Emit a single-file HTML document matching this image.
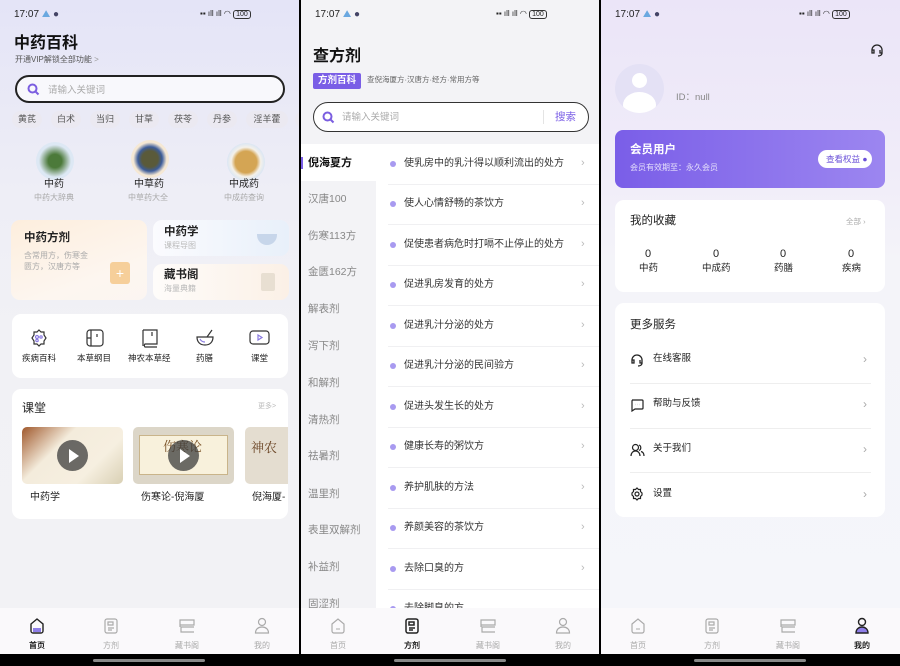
<!DOCTYPE html>
<html><head><meta charset="utf-8"><style>
*{margin:0;padding:0;box-sizing:border-box}
body{width:900px;height:666px;overflow:hidden;background:#000;font-family:"Liberation Sans","Noto Sans CJK SC",sans-serif;position:relative;color:#222;line-height:1.5}
.a{position:absolute;white-space:nowrap}
.p{position:absolute;top:0;height:654px;overflow:hidden}
.st{font-size:10px;color:#222;top:7px}
.nav{position:absolute;left:0;right:0;top:608px;height:46px;background:#faf9fb}
.nl{position:absolute;top:32px;font-size:8px;color:#aaa;width:40px;text-align:center}
.ind{position:absolute;top:659px;height:3px;width:112px;background:#888;border-radius:2px}
.chip{position:absolute;top:111px;height:17px;background:#ebe9f1;border-radius:9px;font-size:9px;color:#555;text-align:center;line-height:17px;width:30px}
.card{position:absolute;background:#fff;border-radius:9px}
.rt{position:absolute;left:392px;font-size:10px;color:#333}
.rt:before{content:"";position:absolute;left:-2px;top:5px;width:6px;height:6px;border-radius:50%;background:#a89af0}
.rt span{margin-left:12px}
.ch{position:absolute;left:581px;font-size:11px;color:#bbb}
.dv{position:absolute;left:388px;width:212px;height:1px;background:#f0f0f2}
.lt{position:absolute;left:308px;font-size:10.5px;color:#888}
</style></head><body>

<!-- PANEL 1 -->
<div class="p" style="left:0;width:299px;background:linear-gradient(180deg,#e4e4f7 0%,#eeeef6 30%,#f1f1f5 50%,#f2f2f5 100%)">
 <div class="a st" style="left:14px">17:07 <span style="color:#6aa8e0">⛰</span> <span style="color:#446">●</span></div>
 <div class="a st" style="left:200px;font-size:8px;top:8px">▪▪ ıll ıll ◠ <span style="border:1px solid #333;border-radius:3px;padding:0 2px;font-size:7px">100</span></div>
 <div class="a" style="left:14px;top:32px;font-size:16px;font-weight:bold;color:#111">中药百科</div>
 <div class="a" style="left:15px;top:54px;font-size:8px;color:#555">开通VIP解锁全部功能 <span style="color:#999">&gt;</span></div>
 <div class="a" style="left:15px;top:75px;width:270px;height:28px;border:2px solid #222;border-radius:14px;background:#f8f8fc">
  <svg class="a" style="left:10px;top:6px" width="13" height="13" viewBox="0 0 13 13"><circle cx="5.5" cy="5.5" r="4" fill="none" stroke="#7b5ee0" stroke-width="2"/><path d="M8.5 8.5l3 3" stroke="#7b5ee0" stroke-width="2"/></svg>
  <div class="a" style="left:31px;top:7px;font-size:9.5px;color:#aaa">请输入关键词</div>
 </div>
 <div class="chip" style="left:12px">黄芪</div><div class="chip" style="left:51px">白术</div><div class="chip" style="left:90px">当归</div><div class="chip" style="left:129px">甘草</div><div class="chip" style="left:168px">茯苓</div><div class="chip" style="left:207px">丹参</div><div class="chip" style="left:246px;width:42px">淫羊藿</div><div class="chip" style="left:295px">.</div>
 <div class="a" style="left:36px;top:142px;width:38px;height:38px;border-radius:50%;background:radial-gradient(circle,#4c7a3a 25%,#dde8f4 60%)"></div>
 <div class="a" style="left:131px;top:140px;width:38px;height:38px;border-radius:50%;background:radial-gradient(circle,#5a5a3a 30%,#3c5c9a 45%,#f5e8d4 62%)"></div>
 <div class="a" style="left:227px;top:143px;width:38px;height:38px;border-radius:50%;background:radial-gradient(circle,#d4a554 40%,#f4f1ea 55%,#dbe6f3 70%)"></div>
 <div class="a" style="left:44px;top:177px;font-size:10px;color:#222">中药</div>
 <div class="a" style="left:34px;top:192px;font-size:8px;color:#aaa">中药大辞典</div>
 <div class="a" style="left:134px;top:177px;font-size:10px;color:#222">中草药</div>
 <div class="a" style="left:128px;top:192px;font-size:8px;color:#aaa">中草药大全</div>
 <div class="a" style="left:229px;top:177px;font-size:10px;color:#222">中成药</div>
 <div class="a" style="left:224px;top:192px;font-size:8px;color:#aaa">中成药查询</div>
 <div class="a" style="left:11px;top:220px;width:136px;height:80px;border-radius:9px;background:linear-gradient(160deg,#fdeedd,#fdf6f0 70%,#fbf5f1)"></div>
 <div class="a" style="left:24px;top:230px;font-size:11.5px;font-weight:bold;color:#222">中药方剂</div>
 <div class="a" style="left:24px;top:250px;font-size:8px;color:#aaa;line-height:11px;white-space:normal;width:70px">含常用方，伤寒金匮方，汉唐方等</div>
 <div class="a" style="left:110px;top:262px;width:20px;height:22px;border-radius:3px;background:#f6cf9a;color:#fff;text-align:center;font-size:14px;line-height:22px">+</div>
 <div class="a" style="left:153px;top:220px;width:136px;height:36px;border-radius:9px;background:linear-gradient(90deg,#fbfbfe,#e8f0fa)"></div>
 <div class="a" style="left:164px;top:224px;font-size:11.5px;font-weight:bold;color:#222">中药学</div>
 <div class="a" style="left:164px;top:240px;font-size:8px;color:#bbb">课程导图</div>
 <div class="a" style="left:257px;top:234px;width:20px;height:11px;border-radius:0 0 10px 10px;background:#c7d6ea"></div>
 <div class="a" style="left:153px;top:264px;width:136px;height:36px;border-radius:9px;background:linear-gradient(90deg,#fefcfa,#fbf0e6)"></div>
 <div class="a" style="left:164px;top:267px;font-size:11.5px;font-weight:bold;color:#222">藏书阁</div>
 <div class="a" style="left:164px;top:283px;font-size:8px;color:#bbb">海量典籍</div>
 <div class="a" style="left:261px;top:273px;width:14px;height:18px;border-radius:2px;background:#e8dfd2"></div>

 <div class="card" style="left:12px;top:314px;width:276px;height:64px"></div>
 <svg class="a" style="left:29px;top:328px" width="20" height="20" viewBox="0 0 20 20" fill="none" stroke="#333" stroke-width="1.2"><path d="M10 2l2 2h3v3l2 3-2 3v3h-3l-2 2-2-2H5v-3l-2-3 2-3V4h3z"/><circle cx="8" cy="9" r="1.5" stroke="#8a7ae0"/><circle cx="12" cy="9" r="1.2" stroke="#8a7ae0"/><circle cx="8" cy="12.5" r="1.2" stroke="#8a7ae0"/></svg>
 <svg class="a" style="left:85px;top:328px" width="20" height="20" viewBox="0 0 20 20" fill="none" stroke="#333" stroke-width="1.2"><rect x="2" y="2" width="16" height="16" rx="3"/><path d="M6 2v16M2 10h4M12 6v3"/></svg>
 <svg class="a" style="left:140px;top:328px" width="20" height="20" viewBox="0 0 20 20" fill="none" stroke="#333" stroke-width="1.2"><path d="M3 2h14v14H5a2 2 0 0 0 0 3h12M3 2v16M12 4v4"/></svg>
 <svg class="a" style="left:195px;top:328px" width="20" height="20" viewBox="0 0 20 20" fill="none" stroke="#333" stroke-width="1.2"><path d="M2 9h16c0 5-3 8-8 8s-8-3-8-8zM12 9l5-7"/><path d="M5 11c1 2 3 3 5 3" stroke="#8a7ae0"/></svg>
 <svg class="a" style="left:249px;top:329px" width="21" height="18" viewBox="0 0 21 18" fill="none" stroke="#333" stroke-width="1.2"><rect x="1" y="2" width="19" height="13" rx="3"/><path d="M9 6l4 2.5-4 2.5z" stroke="#8a7ae0"/></svg>
 <div class="a" style="left:22px;top:352px;font-size:8.5px">疾病百科</div>
 <div class="a" style="left:77px;top:352px;font-size:8.5px">本草纲目</div>
 <div class="a" style="left:128px;top:352px;font-size:8.5px">神农本草经</div>
 <div class="a" style="left:196px;top:352px;font-size:8.5px">药膳</div>
 <div class="a" style="left:251px;top:352px;font-size:8.5px">课堂</div>

 <div class="card" style="left:12px;top:389px;width:276px;height:130px"></div>
 <div class="a" style="left:22px;top:399px;font-size:12px;color:#222">课堂</div>
 <div class="a" style="left:258px;top:402px;font-size:7px;color:#bbb">更多&gt;</div>
 <div class="a" style="left:22px;top:427px;width:101px;height:57px;border-radius:5px;background:linear-gradient(135deg,#a0582c 0%,#f4ecdc 35%,#f6efe0 70%,#d9d0b4 100%)"></div>
 <div class="a" style="left:133px;top:427px;width:101px;height:57px;border-radius:5px;background:#dcd6c8"><div class="a" style="left:6px;top:8px;width:89px;height:40px;background:#f8f1dc;border:1px solid #c9b48a"></div><div class="a" style="left:30px;top:9px;font-size:13px;color:#7a5226;font-family:'Noto Serif CJK SC',serif">伤寒论</div></div>
 <div class="a" style="left:245px;top:427px;width:43px;height:57px;border-radius:5px 0 0 5px;background:#e4ddd0"><div class="a" style="left:6px;top:10px;font-size:13px;color:#6a4424;font-family:'Noto Serif CJK SC',serif">神农</div></div>
 <div class="a" style="left:57px;top:440px;width:31px;height:31px;border-radius:50%;background:rgba(60,60,60,.75)"><div class="a" style="left:12px;top:9px;border-left:10px solid #fff;border-top:7px solid transparent;border-bottom:7px solid transparent"></div></div>
 <div class="a" style="left:168px;top:440px;width:31px;height:31px;border-radius:50%;background:rgba(60,60,60,.75)"><div class="a" style="left:12px;top:9px;border-left:10px solid #fff;border-top:7px solid transparent;border-bottom:7px solid transparent"></div></div>
 <div class="a" style="left:30px;top:490px;font-size:10px">中药学</div>
 <div class="a" style="left:141px;top:490px;font-size:10px">伤寒论-倪海厦</div>
 <div class="a" style="left:252px;top:490px;font-size:10px">倪海厦-</div>

 <div class="nav">
  <svg class="a" style="left:29px;top:10px" width="16" height="16" viewBox="0 0 16 16"><path d="M2 6l6-5 6 5v7a2 2 0 0 1-2 2H4a2 2 0 0 1-2-2z" fill="none" stroke="#222" stroke-width="1.4"/><path d="M4 10h8v4H4z" fill="#8e7ee8"/></svg>
  <div class="nl" style="left:17px;color:#222;font-weight:bold">首页</div>
 </div>
</div>

<!-- PANEL 2 -->
<div class="p" style="left:301px;width:299px;background:#f3f3f6">
 <div class="a st" style="left:14px">17:07 <span style="color:#6aa8e0">⛰</span> <span style="color:#446">●</span></div>
 <div class="a st" style="left:195px;font-size:8px;top:8px">▪▪ ıll ıll ◠ <span style="border:1px solid #333;border-radius:3px;padding:0 2px;font-size:7px">100</span></div>
 <div class="a" style="left:12px;top:45px;font-size:16px;font-weight:bold;color:#111">查方剂</div>
 <div class="a" style="left:12px;top:73px;width:48px;height:16px;background:#7a5ee6;border-radius:2px;color:#fff;font-size:9.5px;font-weight:bold;text-align:center;line-height:16px">方剂百科</div>
 <div class="a" style="left:66px;top:74px;font-size:7.5px;color:#666">查倪海厦方·汉唐方·经方·常用方等</div>
 <div class="a" style="left:12px;top:102px;width:276px;height:30px;border:1.5px solid #333;border-radius:15px;background:#fff">
  <svg class="a" style="left:8px;top:8px" width="13" height="13" viewBox="0 0 13 13"><circle cx="5.5" cy="5.5" r="4" fill="none" stroke="#7b5ee0" stroke-width="2"/><path d="M8.5 8.5l3 3" stroke="#7b5ee0" stroke-width="2"/></svg>
  <div class="a" style="left:28px;top:8px;font-size:9.5px;color:#aaa">请输入关键词</div>
  <div class="a" style="left:229px;top:7px;width:1px;height:14px;background:#e4e4e4"></div>
  <div class="a" style="left:241px;top:7px;font-size:10.5px;color:#7a5ee6">搜索</div>
 </div>
</div>
<div class="a" style="left:376px;top:144px;width:224px;height:464px;background:#fff"></div>
<div class="a" style="left:301px;top:144px;width:75px;height:37px;background:#fff"></div>
<div class="a" style="left:301px;top:157px;width:2px;height:12px;background:#7a5ee6"></div>
<div class="a" style="left:308px;top:155px;font-size:11px;font-weight:bold;color:#111">倪海夏方</div>
<div class="lt" style="top:192px">汉唐100</div>
<div class="lt" style="top:229px">伤寒113方</div>
<div class="lt" style="top:265px">金匮162方</div>
<div class="lt" style="top:302px">解表剂</div>
<div class="lt" style="top:339px">泻下剂</div>
<div class="lt" style="top:376px">和解剂</div>
<div class="lt" style="top:413px">清热剂</div>
<div class="lt" style="top:449px">祛暑剂</div>
<div class="lt" style="top:487px">温里剂</div>
<div class="lt" style="top:523px">表里双解剂</div>
<div class="lt" style="top:560px">补益剂</div>
<div class="lt" style="top:597px">固涩剂</div>
<div class="rt" style="top:156px"><span>使乳房中的乳汁得以顺利流出的处方</span></div><div class="ch" style="top:155px">›</div><div class="dv" style="top:184px"></div>
<div class="rt" style="top:196px"><span>使人心情舒畅的茶饮方</span></div><div class="ch" style="top:195px">›</div><div class="dv" style="top:224px"></div>
<div class="rt" style="top:237px"><span>促使患者病危时打嗝不止停止的处方</span></div><div class="ch" style="top:236px">›</div><div class="dv" style="top:265px"></div>
<div class="rt" style="top:277px"><span>促进乳房发育的处方</span></div><div class="ch" style="top:276px">›</div><div class="dv" style="top:305px"></div>
<div class="rt" style="top:318px"><span>促进乳汁分泌的处方</span></div><div class="ch" style="top:317px">›</div><div class="dv" style="top:346px"></div>
<div class="rt" style="top:358px"><span>促进乳汁分泌的民间验方</span></div><div class="ch" style="top:357px">›</div><div class="dv" style="top:386px"></div>
<div class="rt" style="top:399px"><span>促进头发生长的处方</span></div><div class="ch" style="top:398px">›</div><div class="dv" style="top:427px"></div>
<div class="rt" style="top:439px"><span>健康长寿的粥饮方</span></div><div class="ch" style="top:438px">›</div><div class="dv" style="top:467px"></div>
<div class="rt" style="top:480px"><span>养护肌肤的方法</span></div><div class="ch" style="top:479px">›</div><div class="dv" style="top:508px"></div>
<div class="rt" style="top:520px"><span>养颜美容的茶饮方</span></div><div class="ch" style="top:519px">›</div><div class="dv" style="top:548px"></div>
<div class="rt" style="top:561px"><span>去除口臭的方</span></div><div class="ch" style="top:560px">›</div><div class="dv" style="top:589px"></div>
<div class="rt" style="top:601px"><span>去除脚臭的方</span></div>

<!-- PANEL 3 -->
<div class="p" style="left:601px;width:299px;background:linear-gradient(180deg,#ebe5f8 0%,#f0ecf9 25%,#f4f4f9 40%,#f5f6fa 100%)">
 <div class="a st" style="left:14px">17:07 <span style="color:#6aa8e0">⛰</span> <span style="color:#446">●</span></div>
 <div class="a st" style="left:198px;font-size:8px;top:8px">▪▪ ıll ıll ◠ <span style="border:1px solid #333;border-radius:3px;padding:0 2px;font-size:7px">100</span></div>
 <svg class="a" style="left:269px;top:43px" width="14" height="14" viewBox="0 0 14 14" fill="none" stroke="#222" stroke-width="1.3"><path d="M2 8V7a5 5 0 0 1 10 0v1M2 7v3h2V7zM12 7v3h-2V7M12 10c0 2-2 3-4 3"/></svg>
 <div class="a" style="left:14px;top:64px;width:49px;height:49px;border-radius:50%;background:#e4e1f5;overflow:hidden"><div class="a" style="left:17px;top:9px;width:15px;height:15px;border-radius:50%;background:#fff"></div><div class="a" style="left:8px;top:28px;width:33px;height:26px;border-radius:50%;background:#fff"></div></div>
 <div class="a" style="left:75px;top:91px;font-size:9.5px;color:#888">ID：null</div>
 <div class="a" style="left:14px;top:130px;width:270px;height:58px;border-radius:8px;background:linear-gradient(90deg,#7a5ee8,#9c86f0)"></div>
 <div class="a" style="left:29px;top:142px;font-size:11.5px;font-weight:bold;color:#fff">会员用户</div>
 <div class="a" style="left:29px;top:162px;font-size:8px;color:#e6e0fb">会员有效期至：永久会员</div>
 <div class="a" style="left:217px;top:150px;width:54px;height:18px;border-radius:9px;background:#fff;font-size:8.5px;color:#6a50d8;line-height:18px;padding-left:8px">查看权益 ●</div>
 <div class="card" style="left:14px;top:200px;width:270px;height:92px"></div>
 <div class="a" style="left:29px;top:213px;font-size:11.5px;color:#222">我的收藏</div>
 <div class="a" style="left:245px;top:216px;font-size:7.5px;color:#aaa">全部 ›</div>
 <div class="a" style="left:44px;top:246px;font-size:11px">0</div><div class="a" style="left:38px;top:262px;font-size:9.5px">中药</div>
 <div class="a" style="left:112px;top:246px;font-size:11px">0</div><div class="a" style="left:101px;top:262px;font-size:9.5px">中成药</div>
 <div class="a" style="left:179px;top:246px;font-size:11px">0</div><div class="a" style="left:173px;top:262px;font-size:9.5px">药膳</div>
 <div class="a" style="left:247px;top:246px;font-size:11px">0</div><div class="a" style="left:241px;top:262px;font-size:9.5px">疾病</div>
 <div class="card" style="left:14px;top:303px;width:270px;height:214px"></div>
 <div class="a" style="left:29px;top:317px;font-size:11.5px;color:#222">更多服务</div>
 <svg class="a" style="left:29px;top:353px" width="14" height="14" viewBox="0 0 14 14" fill="none" stroke="#222" stroke-width="1.3"><path d="M2 8V7a5 5 0 0 1 10 0v1M2 7v3h2V7zM12 7v3h-2V7M12 10c0 2-2 3-4 3"/></svg>
 <div class="a" style="left:52px;top:352px;font-size:9.5px">在线客服</div><div class="a" style="left:262px;top:350px;font-size:12px;color:#aaa">›</div>
 <div class="a" style="left:29px;top:383px;width:241px;height:1px;background:#eee"></div>
 <svg class="a" style="left:29px;top:398px" width="14" height="14" viewBox="0 0 14 14" fill="none" stroke="#222" stroke-width="1.2"><path d="M2 2h10a1 1 0 0 1 1 1v7a1 1 0 0 1-1 1H5l-3 2V3a1 1 0 0 1 1-1z"/><path d="M5 6.5h.1M7 6.5h.1M9 6.5h.1" stroke-width="1.6"/></svg>
 <div class="a" style="left:52px;top:397px;font-size:9.5px">帮助与反馈</div><div class="a" style="left:262px;top:395px;font-size:12px;color:#aaa">›</div>
 <div class="a" style="left:29px;top:428px;width:241px;height:1px;background:#eee"></div>
 <svg class="a" style="left:29px;top:443px" width="15" height="14" viewBox="0 0 15 14" fill="none" stroke="#222" stroke-width="1.2"><circle cx="5.5" cy="4.5" r="3"/><path d="M1 13c0-3 2-5 4.5-5s4.5 2 4.5 5M9 2a3 3 0 0 1 0 5.5M11 8.5c2 .5 3 2.5 3 4.5"/></svg>
 <div class="a" style="left:52px;top:442px;font-size:9.5px">关于我们</div><div class="a" style="left:262px;top:440px;font-size:12px;color:#aaa">›</div>
 <div class="a" style="left:29px;top:472px;width:241px;height:1px;background:#eee"></div>
 <svg class="a" style="left:29px;top:487px" width="14" height="14" viewBox="0 0 14 14" fill="none" stroke="#222" stroke-width="1.2"><path d="M7 1l1.5 1.5h2v2L12 6v2l-1.5 1.5v2h-2L7 13l-1.5-1.5h-2v-2L2 8V6l1.5-1.5v-2h2z"/><circle cx="7" cy="7" r="2"/></svg>
 <div class="a" style="left:52px;top:487px;font-size:9.5px">设置</div><div class="a" style="left:262px;top:485px;font-size:12px;color:#aaa">›</div>
</div>

<div class="nav" style="left:301px;width:299px"></div>
<div class="nav" style="left:601px;width:299px"></div>

<svg class="a" style="left:104px;top:618px" width="14" height="16" viewBox="0 0 14 16" fill="none" stroke="#aaa" stroke-width="1.2"><rect x="1" y="1" width="12" height="14" rx="2"/><path d="M4 4h5v3H4zM4 10h6M4 12h4"/></svg>
<div class="nl a" style="left:91px;top:640px">方剂</div>
<svg class="a" style="left:178px;top:619px" width="18" height="15" viewBox="0 0 18 15" fill="none" stroke="#aaa" stroke-width="1.2"><path d="M2 1h14v5H2zM16 8H3v5h13M2 6v2"/></svg>
<div class="nl a" style="left:167px;top:640px">藏书阁</div>
<svg class="a" style="left:254px;top:617px" width="16" height="17" viewBox="0 0 16 17" fill="none" stroke="#aaa" stroke-width="1.2"><circle cx="8" cy="5" r="3.5"/><path d="M1.5 16c0-4 3-6 6.5-6s6.5 2 6.5 6z"/></svg>
<div class="nl a" style="left:242px;top:640px">我的</div>

<svg class="a" style="left:330px;top:618px" width="16" height="16" viewBox="0 0 16 16"><path d="M2 6l6-5 6 5v7a2 2 0 0 1-2 2H4a2 2 0 0 1-2-2z" fill="none" stroke="#aaa" stroke-width="1.2"/><path d="M6 11h4" stroke="#aaa"/></svg>
<div class="nl a" style="left:318px;top:640px">首页</div>
<svg class="a" style="left:405px;top:618px" width="14" height="16" viewBox="0 0 14 16" fill="none" stroke="#222" stroke-width="1.5"><rect x="1" y="1" width="12" height="14" rx="2"/><path d="M4 4h5v3H4zM4 10h6M4 12h4"/></svg>
<div class="nl a" style="left:392px;top:640px;color:#222;font-weight:bold">方剂</div>
<svg class="a" style="left:479px;top:619px" width="18" height="15" viewBox="0 0 18 15" fill="none" stroke="#aaa" stroke-width="1.2"><path d="M2 1h14v5H2zM16 8H3v5h13M2 6v2"/></svg>
<div class="nl a" style="left:468px;top:640px">藏书阁</div>
<svg class="a" style="left:555px;top:617px" width="16" height="17" viewBox="0 0 16 17" fill="none" stroke="#aaa" stroke-width="1.2"><circle cx="8" cy="5" r="3.5"/><path d="M1.5 16c0-4 3-6 6.5-6s6.5 2 6.5 6z"/></svg>
<div class="nl a" style="left:543px;top:640px">我的</div>

<svg class="a" style="left:630px;top:618px" width="16" height="16" viewBox="0 0 16 16"><path d="M2 6l6-5 6 5v7a2 2 0 0 1-2 2H4a2 2 0 0 1-2-2z" fill="none" stroke="#aaa" stroke-width="1.2"/><path d="M6 11h4" stroke="#aaa"/></svg>
<div class="nl a" style="left:618px;top:640px">首页</div>
<svg class="a" style="left:705px;top:618px" width="14" height="16" viewBox="0 0 14 16" fill="none" stroke="#aaa" stroke-width="1.2"><rect x="1" y="1" width="12" height="14" rx="2"/><path d="M4 4h5v3H4zM4 10h6M4 12h4"/></svg>
<div class="nl a" style="left:692px;top:640px">方剂</div>
<svg class="a" style="left:779px;top:619px" width="18" height="15" viewBox="0 0 18 15" fill="none" stroke="#aaa" stroke-width="1.2"><path d="M2 1h14v5H2zM16 8H3v5h13M2 6v2"/></svg>
<div class="nl a" style="left:768px;top:640px">藏书阁</div>
<svg class="a" style="left:854px;top:617px" width="16" height="17" viewBox="0 0 16 17"><path d="M2 16c0-4 3-6 6-6s6 2 6 6z" fill="#8e7ee8" stroke="#222" stroke-width="1.4"/><circle cx="8" cy="5" r="3.5" fill="none" stroke="#222" stroke-width="1.4"/></svg>
<div class="nl a" style="left:842px;top:640px;color:#222;font-weight:bold">我的</div>

<div class="a" style="left:299px;top:0;width:2px;height:666px;background:#000"></div>
<div class="a" style="left:599px;top:0;width:2px;height:666px;background:#000"></div>
<div class="ind" style="left:93px"></div>
<div class="ind" style="left:394px"></div>
<div class="ind" style="left:694px"></div>
</body></html>
